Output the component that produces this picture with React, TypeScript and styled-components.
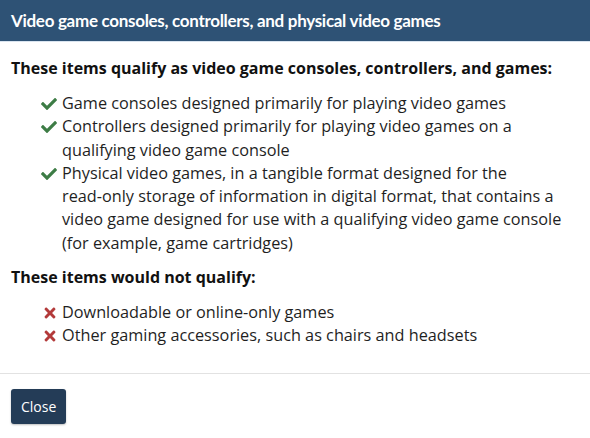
import React from 'react';
import styled, { createGlobalStyle } from 'styled-components';
import { FaCheck, FaTimes } from 'react-icons/fa';

const GlobalStyle = createGlobalStyle`
	html, body {
		margin: 0;
		padding: 0;
		background: #ffffff;
	}
	body {
		font-family: 'Open Sans', 'Noto Sans', sans-serif;
		color: #1b1b1b;
	}
`;

const Modal = styled.div`
	width: 590px;
	height: 438px;
	display: flex;
	flex-direction: column;
	background: #ffffff;
	box-sizing: border-box;
`;

const Header = styled.div`
	height: 41px;
	flex-shrink: 0;
	display: flex;
	align-items: center;
	padding: 0 11px;
	background: #2e5275;
	border-bottom: 1px solid #d9e4ef;
`;

const Title = styled.h2`
	margin: 0;
	font-family: Lato, 'Open Sans', sans-serif;
	font-weight: 700;
	font-size: 17px;
	letter-spacing: -0.3px;
	color: #ffffff;
`;

const Body = styled.div`
	padding: 15px 11px 0;
	display: flex;
	flex-direction: column;
`;

const SectionHeading = styled.p`
	margin: 0;
	font-size: 16px;
	line-height: 23px;
	font-weight: 700;
	color: #111111;
`;

const ItemList = styled.ul`
	list-style: none;
	margin: 12px 0 11px;
	padding: 0 12px 0 30px;
`;

const Item = styled.li`
	display: grid;
	grid-template-columns: 21px 1fr;
	font-size: 16.25px;
	line-height: 23.3px;
	color: #1f1f1f;
`;

const Mark = styled.span<{ $ok: boolean }>`
	display: flex;
	align-items: center;
	justify-content: ${p => (p.$ok ? 'flex-start' : 'center')};
	height: 23.3px;
	padding-right: ${p => (p.$ok ? '0' : '4px')};
	color: ${p => (p.$ok ? '#3d7c45' : '#b33a3a')};
	font-size: 16px;
`;

const Footer = styled.div`
	margin-top: auto;
	border-top: 1px solid #e2e2e2;
	padding: 15px 11px 14px;
`;

const CloseButton = styled.button`
	height: 35px;
	padding: 0 10px;
	border: none;
	border-radius: 3px;
	background: #243c57;
	color: #ffffff;
	font-family: 'Open Sans', sans-serif;
	font-size: 14px;
	cursor: pointer;
	box-shadow: 0 1px 2px rgba(0, 0, 0, 0.25);
`;

// non-breaking hyphen keeps "read-only" on one line
const qualifying = [
	'Game consoles designed primarily for playing video games',
	'Controllers designed primarily for playing video games on a qualifying video game console',
	'Physical video games, in a tangible format designed for the read\u2011only storage of information in digital format, that contains a video game designed for use with a qualifying video game console (for example, game cartridges)'
];

const excluded = [
	'Downloadable or online-only games',
	'Other gaming accessories, such as chairs and headsets'
];

export default function App(): JSX.Element {
	return (
		<>
			<GlobalStyle />
			<Modal>
				<Header>
					<Title>Video game consoles, controllers, and physical video games</Title>
				</Header>
				<Body>
					<SectionHeading>
						These items qualify as video game consoles, controllers, and games:
					</SectionHeading>
					<ItemList>
						{qualifying.map(text => (
							<Item key={text}>
								<Mark $ok={true}>
									<FaCheck />
								</Mark>
								<span>{text}</span>
							</Item>
						))}
					</ItemList>
					<SectionHeading>These items would not qualify:</SectionHeading>
					<ItemList>
						{excluded.map(text => (
							<Item key={text}>
								<Mark $ok={false}>
									<FaTimes />
								</Mark>
								<span>{text}</span>
							</Item>
						))}
					</ItemList>
				</Body>
				<Footer>
					<CloseButton>Close</CloseButton>
				</Footer>
			</Modal>
		</>
	);
}
